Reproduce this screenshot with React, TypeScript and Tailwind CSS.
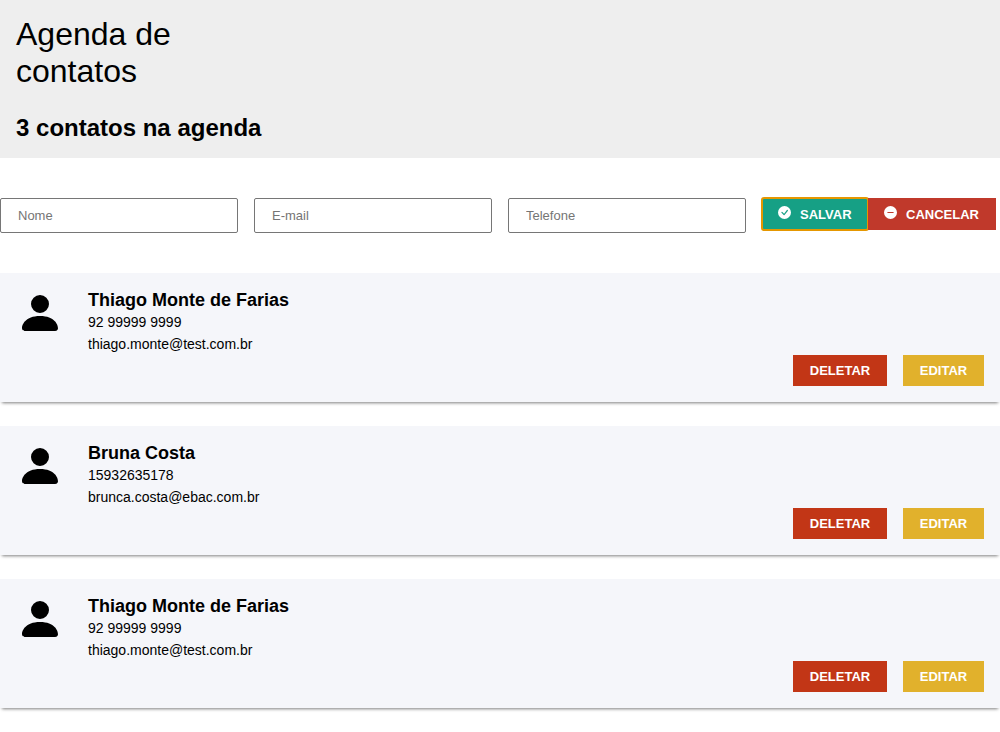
import { BsCheckCircleFill, BsDashCircleFill, BsPersonFill } from "react-icons/bs";

type Contact = { id: number; name: string; phone: string; email: string };

const contacts: Contact[] = [
  { id: 1, name: "Thiago Monte de Farias", phone: "92 99999 9999", email: "thiago.monte@test.com.br" },
  { id: 2, name: "Bruna Costa", phone: "15932635178", email: "brunca.costa@ebac.com.br" },
  { id: 3, name: "Thiago Monte de Farias", phone: "92 99999 9999", email: "thiago.monte@test.com.br" },
];

const fields = [
  { label: "Nome", type: "text" },
  { label: "E-mail", type: "email" },
  { label: "Telefone", type: "tel" },
];

function Header({ total }: { total: number }) {
  return (
    <header className="grid grid-cols-4 gap-x-4 gap-y-6 bg-[#eeeeee] p-4">
      <h1 className="text-[32px] leading-[37px]">Agenda de contatos</h1>
      <h2 className="col-span-4 text-2xl leading-7 font-bold">{total} contatos na agenda</h2>
    </header>
  );
}

function ContactForm() {
  return (
    <form className="grid grid-cols-4 items-start gap-4 py-10" onSubmit={(e) => e.preventDefault()}>
      {fields.map((field) => (
        <input
          key={field.label}
          type={field.type}
          aria-label={field.label}
          placeholder={field.label}
          className="h-[35px] w-full min-w-0 rounded-xs border border-[#767676] bg-white px-[17px] text-[13px] placeholder:text-[#757575]"
        />
      ))}
      <div className="flex">
        <button
          type="submit"
          className="flex h-8 min-w-[106px] items-center gap-[9px] rounded-xs bg-[#16a085] px-4 pt-0.5 text-[13px] font-bold text-white outline-2 -outline-offset-1 outline-[#e59700]"
        >
          <BsCheckCircleFill className="mb-[5px] size-[13px] shrink-0" aria-hidden="true" />
          SALVAR
        </button>
        <button
          type="button"
          className="relative flex h-8 min-w-[128px] items-center gap-[9px] bg-[#c0392b] px-4 pt-0.5 text-[13px] font-bold text-white"
        >
          <BsDashCircleFill className="mb-[5px] size-[13px] shrink-0" aria-hidden="true" />
          CANCELAR
        </button>
      </div>
    </form>
  );
}

function ContactCard({ contact }: { contact: Contact }) {
  return (
    <li className="bg-[#f5f6fa] p-4 shadow-[0_3px_3px_-2px_rgba(0,0,0,0.5)]">
      <div className="flex gap-6">
        <BsPersonFill className="size-12 shrink-0" aria-hidden="true" />
        <div className="text-sm leading-[22px]">
          <h3 className="text-lg leading-[22px] font-bold">{contact.name}</h3>
          <p>{contact.phone}</p>
          <p>{contact.email}</p>
        </div>
      </div>
      <div className="flex justify-end gap-4">
        <button type="button" className="h-[31px] min-w-[94px] bg-[#c23616] px-4 text-[13px] font-bold text-white">
          DELETAR
        </button>
        <button type="button" className="h-[31px] min-w-[81px] bg-[#e1b12c] px-4 text-[13px] font-bold text-white">
          EDITAR
        </button>
      </div>
    </li>
  );
}

export default function App() {
  return (
    <div className="min-h-screen bg-white font-['Liberation_Sans',Arial,sans-serif] text-black">
      <Header total={contacts.length} />
      <main>
        <ContactForm />
        <ul className="flex flex-col gap-6 pb-6">
          {contacts.map((contact) => (
            <ContactCard key={contact.id} contact={contact} />
          ))}
        </ul>
      </main>
    </div>
  );
}
